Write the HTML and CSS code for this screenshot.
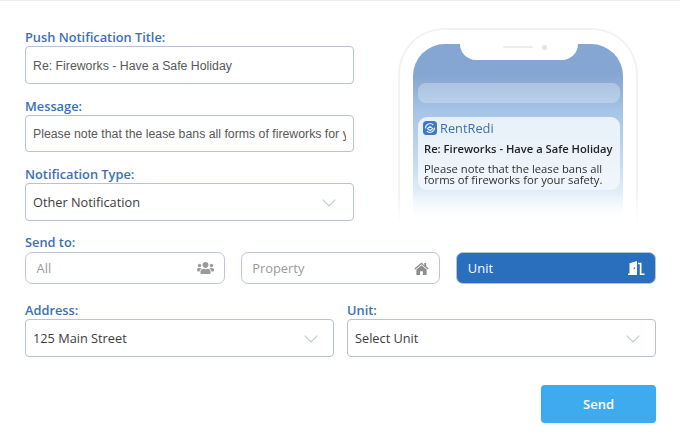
FILE: index.html
```html
<!DOCTYPE html>
<html lang="en">
<head>
<meta charset="utf-8">
<title>Push Notification</title>
<link rel="stylesheet" href="styles.css">
</head>
<body>
<main class="page">
  <section class="top">
    <div class="fields">
      <div class="field">
        <label class="label">Push Notification Title:</label>
        <input class="control" type="text" value="Re: Fireworks - Have a Safe Holiday">
      </div>
      <div class="field">
        <label class="label">Message:</label>
        <input class="control control-short" type="text" value="Please note that the lease bans all forms of fireworks for your safety.">
      </div>
      <div class="field">
        <label class="label">Notification Type:</label>
        <div class="select"><span>Other Notification</span><svg class="chev" viewBox="0 0 14 8"><path d="M.7.7L7 7l6.300-6.300"/></svg></div>
      </div>
    </div>
    <div class="phone">
      <div class="screen">
        <div class="notch"><span class="speaker"></span><span class="camera"></span></div>
        <div class="bar"></div>
        <div class="card">
          <div class="brand">
            <svg class="logo" viewBox="0 0 16 16"><rect x="0" y="0" width="16" height="16" rx="4" fill="#3f78c4"/><path d="M2.900 8.400a5.100 5.100 0 0 1 8.900-3.700M13.100 7.600a5.100 5.100 0 0 1-8.900 3.700" fill="none" stroke="#e8f1f9" stroke-width="1.300"/><path d="M5 8.500l3-2.300 3.200 2.500-3.100 2.200z" fill="none" stroke="#e8f1f9" stroke-width="1.200"/></svg>
            <span>RentRedi</span>
          </div>
          <div class="card-title">Re: Fireworks - Have a Safe Holiday</div>
          <div class="card-text">Please note that the lease bans all forms of fireworks for your safety.</div>
        </div>
      </div>
    </div>
  </section>

  <section class="send-to">
    <div class="label">Send to:</div>
    <div class="choices">
      <div class="choice"><span>All</span>
        <svg class="ico ico-users" viewBox="0 0 640 512"><path d="M96 224c35.300 0 64-28.700 64-64s-28.700-64-64-64-64 28.700-64 64 28.700 64 64 64zm448 0c35.300 0 64-28.700 64-64s-28.700-64-64-64-64 28.700-64 64 28.700 64 64 64zm32 32h-64c-17.600 0-33.500 7.100-45.100 18.600 40.300 22.100 68.900 62 75.100 109.400h66c17.700 0 32-14.300 32-32v-32c0-35.300-28.700-64-64-64zm-256 0c61.900 0 112-50.100 112-112S381.900 32 320 32 208 82.100 208 144s50.100 112 112 112zm76.800 32h-8.300c-20.800 10-43.900 16-68.500 16s-47.600-6-68.500-16h-8.300C179.600 288 128 339.600 128 403.200V432c0 26.500 21.500 48 48 48h288c26.500 0 48-21.500 48-48v-28.800c0-63.600-51.600-115.200-115.200-115.200zm-223.700-13.400C161.500 263.100 145.600 256 128 256H64c-35.300 0-64 28.700-64 64v32c0 17.700 14.300 32 32 32h65.900c6.300-47.400 34.900-87.300 75.200-109.400z"/></svg>
      </div>
      <div class="choice"><span>Property</span>
        <svg class="ico ico-home" viewBox="0 0 16 14"><path d="M8 0.500L0.300 7l.9 1.100L8 2.400l6.800 5.700.9-1.100-2.700-2.300V1h-2v2.400z"/><path d="M8 3.600L2.500 8.200V14h4V10h3v4h4V8.200z"/></svg>
      </div>
      <div class="choice choice-on"><span>Unit</span>
        <svg class="ico ico-door" viewBox="0 0 17 14"><path d="M0 14v-1.500h1.500V2.200L9 0v14zM6.300 6.400a.8.8 0 1 0 .01 0z" fill-rule="evenodd"/><path d="M10 1.800h3.500v10.700h3V14h-4.700V3.300H10z"/></svg>
      </div>
    </div>
  </section>

  <section class="pair">
    <div class="field">
      <div class="label">Address:</div>
      <div class="select"><span>125 Main Street</span><svg class="chev" viewBox="0 0 14 8"><path d="M.7.7L7 7l6.300-6.300"/></svg></div>
    </div>
    <div class="field">
      <div class="label">Unit:</div>
      <div class="select"><span>Select Unit</span><svg class="chev" viewBox="0 0 14 8"><path d="M.7.7L7 7l6.300-6.300"/></svg></div>
    </div>
  </section>

  <div class="actions"><button class="send" type="button">Send</button></div>
</main>
</body>
</html>
```

FILE: styles.css
```css
* { box-sizing: border-box; }
html, body { margin: 0; padding: 0; background: #fff; }
body { width: 680px; height: 444px; overflow: hidden; font-family: "Open Sans", "Noto Sans", sans-serif; }
.page { padding: 27px 24px 0 25px; border-top: 1px solid #ececec; }

.top { display: flex; height: 197px; }
.fields { width: 329px; padding-top: 1px; }
.field + .field { margin-top: 14px; }
.label { display: block; height: 17px; line-height: 17px; font-size: 12.8px; font-weight: 600; color: #3b6fb8; white-space: nowrap; }

.control, .select {
  display: flex; align-items: center; width: 100%; height: 38px;
  border: 1px solid #b7c2d2; border-radius: 4px; background: #fff; color: #585858;
}
.control { padding: 1px 7px 0; font: 12.3px "Liberation Sans", Arial, sans-serif; outline: none; }
.control-short { height: 37px; padding-top: 0; }
.select { justify-content: space-between; padding: 0 17px 0 7px; font-size: 12.75px; color: #3c3c3c; }
.pair .select { padding-right: 15px; }
.chev { width: 14px; height: 8px; margin-top: 2px; }
.chev path { fill: none; stroke: #c3cad6; stroke-width: 1.1; }

.phone {
  width: 240px; height: 197px; margin-left: 44px; padding: 14px 13px 0;
  border: 2px solid #f1f2f4; border-bottom: 0; border-radius: 46px 46px 0 0;
  overflow: hidden;
  -webkit-mask-image: linear-gradient(to bottom, #000 165px, transparent 196px);
  mask-image: linear-gradient(to bottom, #000 165px, transparent 196px);
}
.screen {
  position: relative; height: 190px; border-radius: 32px 32px 0 0; padding: 39px 3px 0 5px;
  background: linear-gradient(to bottom, #85a5d2 0, #85a5d2 30px, #a6c5e7 68px, #c4dcf1 120px, #f3f8fc 165px, #fff 178px);
}
.notch {
  position: absolute; top: 0; left: 47px; width: 118px; height: 16px; background: #fff;
  border-radius: 0 0 16px 16px; display: flex; align-items: flex-start; justify-content: center; gap: 9px; padding: 1px 0 0 11px;
}
.speaker { width: 30px; height: 2px; margin-top: 1px; background: #ececee; border-radius: 1px; }
.camera { width: 5px; height: 5px; border-radius: 50%; background: #e4e5e8; }
.bar { height: 20px; border-radius: 8px; background: rgba(255,255,255,.28); }
.card {
  height: 73px; margin-top: 14px; padding: 1px 4px 0 4px; border-radius: 9px;
  background: rgba(243,248,252,.85); color: #222;
}
.brand { display: flex; align-items: center; gap: 3px; height: 19px; font-size: 12.8px; color: #3b6fb8; }
.logo { width: 14px; height: 14px; flex: none; margin-left: 1px; }
.card-title { margin: 5px 0 0 2px; font-size: 11.2px; line-height: 14px; font-weight: 600; white-space: nowrap; }
.card-text { margin: 7px 0 0 2px; font-size: 11.25px; line-height: 11px; color: #2e2e2e; }

.send-to { margin-top: 9px; }
.choices { display: flex; gap: 16px; margin-top: 1px; }
.choice {
  flex: 1; height: 32px; display: flex; align-items: center; justify-content: space-between;
  padding: 0 10px 0 10.5px; border: 1px solid #bcc6d6; border-radius: 7px; background: #fff;
  font-size: 12.9px; color: #9a9a9a;
}
.choice-on { background: #2a6fbe; color: #fff; border-color: #b7c2d2; }
.ico { fill: #9a9a9a; display: block; }
.ico-users { width: 17px; height: 14px; }
.ico-home { width: 15px; height: 13px; fill: #8e8e8e; }
.ico-door { width: 17px; height: 14px; fill: #fff; }

.pair { display: flex; gap: 13px; margin-top: 18px; }
.pair .field { flex: none; width: 309px; margin: 0; }

.actions { display: flex; justify-content: flex-end; margin-top: 28px; }
.send {
  width: 115px; height: 38px; border: 0; border-radius: 4px; background: #3eabee; color: #fff;
  font: 600 13px "Open Sans", sans-serif; box-shadow: 0 1px 3px rgba(0,0,0,.12);
}
```
